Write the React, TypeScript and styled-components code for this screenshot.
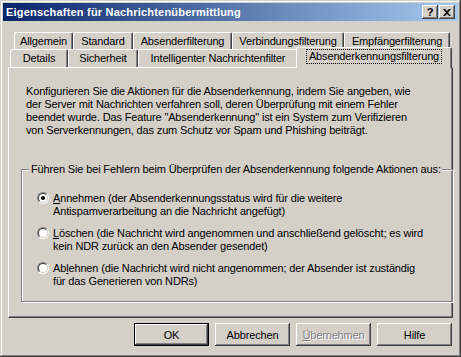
import React from 'react';
import styled, { createGlobalStyle } from 'styled-components';

const GlobalStyle = createGlobalStyle`
  html, body {
    margin: 0;
    padding: 0;
    background: #d4d0c8;
  }
  body {
    font-family: Tahoma, "Liberation Sans", Arial, sans-serif;
    font-size: 11px;
    letter-spacing: -0.15px;
    color: #000;
  }
`;

const Window = styled.div`
  box-sizing: border-box;
  width: 461px;
  height: 357px;
  padding: 3px;
  background: #d4d0c8;
  box-shadow: inset -1px -1px #404040, inset 1px 1px #d4d0c8,
    inset -2px -2px #808080, inset 2px 2px #fff;
  display: flex;
  flex-direction: column;
`;

const TitleBar = styled.div`
  height: 18px;
  display: flex;
  align-items: center;
  padding: 0 3px 0 3px;
  background: linear-gradient(to right, #0a246a, #a6caf0);
  color: #fff;
  font-weight: bold;
  font-size: 11px;
  letter-spacing: 0.2px;
`;

const Title = styled.span`
  flex: 1;
  white-space: nowrap;
`;

const CaptionButton = styled.button<{ $gap?: number }>`
  box-sizing: border-box;
  width: 16px;
  height: 14px;
  margin-left: ${(p) => p.$gap ?? 0}px;
  padding: 0;
  border: none;
  background: #d4d0c8;
  box-shadow: inset -1px -1px #404040, inset 1px 1px #fff,
    inset -2px -2px #808080, inset 2px 2px #d4d0c8;
  display: flex;
  align-items: center;
  justify-content: center;
  font-family: "Liberation Sans", Arial, sans-serif;
  font-weight: bold;
  font-size: 11px;
  color: #000;
  line-height: 1;
`;

const Body = styled.div`
  flex: 1;
  display: flex;
  flex-direction: column;
  padding: 11px 5px 0 5px;
`;

const TabRow = styled.div<{ $indent: number; $h: number }>`
  display: flex;
  align-items: flex-end;
  height: ${(p) => p.$h}px;
  padding-left: ${(p) => p.$indent}px;
`;

const Tab = styled.div<{ $w: number; $active?: boolean }>`
  box-sizing: border-box;
  flex: none;
  width: ${(p) => p.$w}px;
  height: ${(p) => (p.$active ? 21 : 18)}px;
  margin-left: ${(p) => (p.$active ? -2 : 0)}px;
  margin-bottom: ${(p) => (p.$active ? -1 : 0)}px;
  position: relative;
  z-index: ${(p) => (p.$active ? 2 : 1)};
  background: #d4d0c8;
  border-top: 1px solid #fff;
  border-left: 1px solid #fff;
  border-right: 1px solid #404040;
  border-radius: 2px 2px 0 0;
  box-shadow: inset -1px 0 #808080;
  display: flex;
  justify-content: center;
  align-items: flex-start;
  padding-top: 2px;
  line-height: 13px;
  white-space: nowrap;
`;

const FocusLabel = styled.span`
  outline: 1px dotted #000;
  padding: 0 2px;
`;

const Panel = styled.div`
  box-sizing: border-box;
  height: 251px;
  position: relative;
  z-index: 1;
  border-top: 1px solid #fff;
  border-left: 1px solid #fff;
  border-right: 1px solid #404040;
  border-bottom: 1px solid #404040;
  box-shadow: inset -1px -1px #808080;
  padding: 17px 10px 0 12px;
`;

const Intro = styled.p`
  margin: 0 0 0 5px;
  line-height: 13px;
  white-space: nowrap;
`;

const Group = styled.fieldset`
  box-sizing: border-box;
  margin: 26px 0 0 0;
  width: 422px;
  height: 139px;
  padding: 0 10px 0 6px;
  border: 1px solid #808080;
  box-shadow: 1px 1px #fff, inset 1px 1px #fff;
`;

const Legend = styled.legend`
  padding: 0 1px 0 2px;
  margin-left: 1px;
  line-height: 13px;
  white-space: nowrap;
  background: #d4d0c8;
`;

const OptionList = styled.div`
  display: flex;
  flex-direction: column;
  gap: 9px;
  padding: 16px 0 0 9px;
`;

const Option = styled.label`
  display: flex;
  align-items: flex-start;
  gap: 4px;
  line-height: 13px;
  white-space: nowrap;
`;

const RadioOuter = styled.span`
  box-sizing: border-box;
  flex: none;
  width: 12px;
  height: 12px;
  margin-top: 0;
  border-radius: 50%;
  border: 1px solid;
  border-color: #808080 #fff #fff #808080;
  display: flex;
  align-items: center;
  justify-content: center;
`;

const RadioInner = styled.span`
  box-sizing: border-box;
  width: 10px;
  height: 10px;
  border-radius: 50%;
  border: 1px solid;
  border-color: #404040 #d4d0c8 #d4d0c8 #404040;
  background: #fff;
  display: flex;
  align-items: center;
  justify-content: center;
`;

const RadioDot = styled.span`
  width: 4px;
  height: 4px;
  border-radius: 50%;
  background: #000;
`;

const Key = styled.span`
  text-decoration: underline;
`;

const ButtonRow = styled.div`
  display: flex;
  justify-content: flex-end;
  gap: 6px;
  padding-top: 5px;
  padding-right: 1px;
`;

const PushButton = styled.button<{ $default?: boolean; $disabled?: boolean }>`
  box-sizing: border-box;
  width: 75px;
  height: 23px;
  padding: 0;
  border: ${(p) => (p.$default ? '1px solid #000' : 'none')};
  background: #d4d0c8;
  box-shadow: inset -1px -1px #404040, inset 1px 1px #fff,
    inset -2px -2px #808080, inset 2px 2px #d4d0c8;
  font-family: Tahoma, "Liberation Sans", Arial, sans-serif;
  font-size: 11px;
  letter-spacing: -0.15px;
  color: ${(p) => (p.$disabled ? '#808080' : '#000')};
  text-shadow: ${(p) => (p.$disabled ? '1px 1px #fff' : 'none')};
`;

type TabDef = { label: string; w: number; active?: boolean };

const backRow: TabDef[] = [
  { label: 'Allgemein', w: 59 },
  { label: 'Standard', w: 60 },
  { label: 'Absenderfilterung', w: 99 },
  { label: 'Verbindungsfilterung', w: 112 },
  { label: 'Empfängerfilterung', w: 106 },
];

const frontRow: TabDef[] = [
  { label: 'Details', w: 58 },
  { label: 'Sicherheit', w: 70 },
  { label: 'Intelligenter Nachrichtenfilter', w: 160 },
  { label: 'Absenderkennungsfilterung', w: 156, active: true },
];

const Radio = ({ checked }: { checked?: boolean }) => (
  <RadioOuter>
    <RadioInner>{checked && <RadioDot />}</RadioInner>
  </RadioOuter>
);

const App = () => {
  return (
    <>
      <GlobalStyle />
      <Window>
        <TitleBar>
          <Title>Eigenschaften für Nachrichtenübermittlung</Title>
          <CaptionButton>?</CaptionButton>
          <CaptionButton $gap={1}>
            <svg width="8" height="7" viewBox="0 0 8 7">
              <path d="M0 0h2l2 2 2-2h2L5 3.5 8 7H6L4 5 2 7H0l3-3.5z" fill="#000" />
            </svg>
          </CaptionButton>
        </TitleBar>
        <Body>
          <TabRow $indent={6} $h={18}>
            {backRow.map((t) => (
              <Tab key={t.label} $w={t.w}>
                {t.label}
              </Tab>
            ))}
          </TabRow>
          <TabRow $indent={2} $h={17}>
            {frontRow.map((t) => (
              <Tab key={t.label} $w={t.w} $active={t.active}>
                {t.active ? <FocusLabel>{t.label}</FocusLabel> : t.label}
              </Tab>
            ))}
          </TabRow>
          <Panel>
            <Intro>
              Konfigurieren Sie die Aktionen für die Absenderkennung, indem Sie angeben, wie
              <br />
              der Server mit Nachrichten verfahren soll, deren Überprüfung mit einem Fehler
              <br />
              beendet wurde. Das Feature "Absenderkennung" ist ein System zum Verifizieren
              <br />
              von Serverkennungen, das zum Schutz vor Spam und Phishing beiträgt.
            </Intro>
            <Group>
              <Legend>Führen Sie bei Fehlern beim Überprüfen der Absenderkennung folgende Aktionen aus:</Legend>
              <OptionList>
                <Option>
                  <Radio checked />
                  <span>
                    <Key>A</Key>nnehmen (der Absenderkennungsstatus wird für die weitere
                    <br />
                    Antispamverarbeitung an die Nachricht angefügt)
                  </span>
                </Option>
                <Option>
                  <Radio />
                  <span>
                    <Key>L</Key>öschen (die Nachricht wird angenommen und anschließend gelöscht; es wird
                    <br />
                    kein NDR zurück an den Absender gesendet)
                  </span>
                </Option>
                <Option>
                  <Radio />
                  <span>
                    Ab<Key>l</Key>ehnen (die Nachricht wird nicht angenommen; der Absender ist zuständig
                    <br />
                    für das Generieren von NDRs)
                  </span>
                </Option>
              </OptionList>
            </Group>
          </Panel>
          <ButtonRow>
            <PushButton $default>OK</PushButton>
            <PushButton>Abbrechen</PushButton>
            <PushButton $disabled>
              <Key>Ü</Key>bernehmen
            </PushButton>
            <PushButton>Hilfe</PushButton>
          </ButtonRow>
        </Body>
      </Window>
    </>
  );
};

export default App;
